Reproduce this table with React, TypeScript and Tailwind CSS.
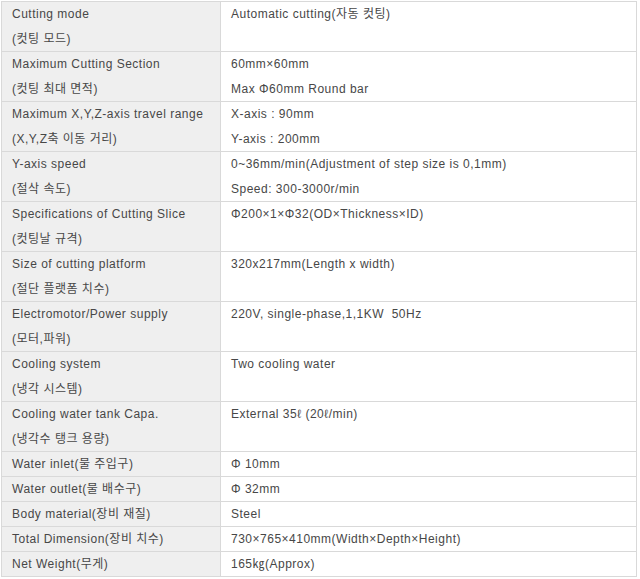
const specs: { label: string[]; value: string[] }[] = [
  { label: ["Cutting mode", "(컷팅 모드)"], value: ["Automatic cutting(자동 컷팅)"] },
  { label: ["Maximum Cutting Section", "(컷팅 최대 면적)"], value: ["60mm×60mm", "Max Φ60mm Round bar"] },
  { label: ["Maximum X,Y,Z-axis travel range", "(X,Y,Z축 이동 거리)"], value: ["X-axis : 90mm", "Y-axis : 200mm"] },
  { label: ["Y-axis speed", "(절삭 속도)"], value: ["0~36mm/min(Adjustment of step size is 0,1mm)", "Speed: 300-3000r/min"] },
  { label: ["Specifications of Cutting Slice", "(컷팅날 규격)"], value: ["Φ200×1×Φ32(OD×Thickness×ID)"] },
  { label: ["Size of cutting platform", "(절단 플랫폼 치수)"], value: ["320x217mm(Length x width)"] },
  { label: ["Electromotor/Power supply", "(모터,파워)"], value: ["220V, single-phase,1,1KW  50Hz"] },
  { label: ["Cooling system", "(냉각 시스템)"], value: ["Two cooling water"] },
  { label: ["Cooling water tank Capa.", "(냉각수 탱크 용량)"], value: ["External 35ℓ (20ℓ/min)"] },
  { label: ["Water inlet(물 주입구)"], value: ["Φ 10mm"] },
  { label: ["Water outlet(물 배수구)"], value: ["Φ 32mm"] },
  { label: ["Body material(장비 재질)"], value: ["Steel"] },
  { label: ["Total Dimension(장비 치수)"], value: ["730×765×410mm(Width×Depth×Height)"] },
  { label: ["Net Weight(무게)"], value: ["165㎏(Approx)"] },
];

export default function App() {
  return (
    <div className="w-[640px] h-[579px] bg-white pt-[1px] pl-[1px] font-['Liberation_Sans','Noto_Sans_CJK_KR',sans-serif] text-[12px] tracking-[0.5px] text-[#474747]">
      <div className="w-[636px] border-t border-l border-[#d9d9d9]">
        {specs.map((row, i) => {
          const lh = row.label.length > 1 ? "h-[49px] leading-[24.5px]" : "h-[24px] leading-[24px]";
          return (
            <div key={i} className="flex border-b border-[#d9d9d9]">
              <div className={`w-[219px] shrink-0 overflow-hidden bg-[#efefef] border-r border-[#d9d9d9] px-[10px] ${lh}`}>
                {row.label.map((t, j) => (
                  <div key={j} className="whitespace-pre">{t}</div>
                ))}
              </div>
              <div className={`flex-1 overflow-hidden border-r border-[#d9d9d9] px-[10px] ${lh}`}>
                {row.value.map((t, j) => (
                  <div key={j} className="whitespace-pre">{t}</div>
                ))}
              </div>
            </div>
          );
        })}
      </div>
    </div>
  );
}
